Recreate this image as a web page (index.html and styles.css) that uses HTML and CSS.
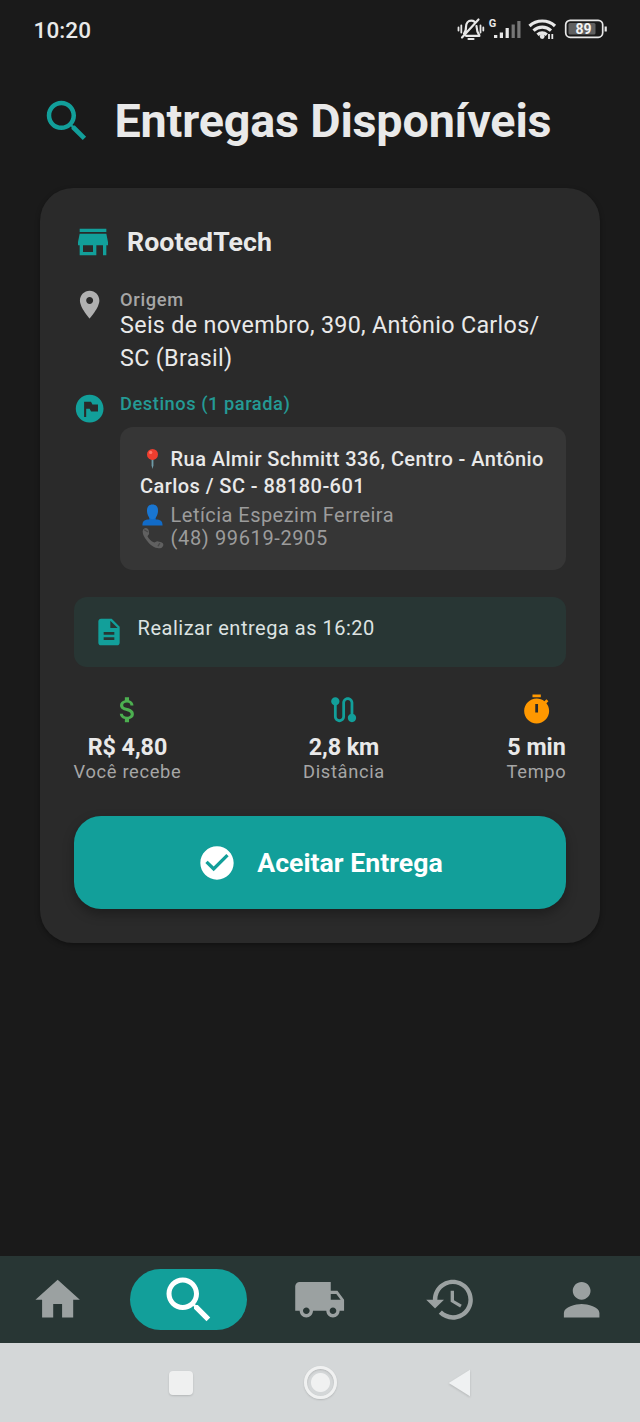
FILE: index.html
```html
<!DOCTYPE html>
<html lang="pt-BR">
<head>
<meta charset="utf-8">
<title>Entregas Disponíveis</title>
<link rel="stylesheet" href="styles.css">
</head>
<body>
<div class="screen">
  <header class="status">
    <span class="clock">10:20</span>
    <svg class="status-icons" viewBox="0 0 152 28" fill="none">
      <g stroke="#e8e8e8" stroke-width="2.200" stroke-linecap="round">
        <path d="M2.500 11.500v3M5.300 9.500v7M24.500 9.500v7M27.300 11.500v3" stroke-width="1.800"/>
        <path d="M10 19.800h13.500M8 17.500c2-2 2-4 2-6.500 0-4 2-6.300 5.300-6.300 1.300 0 2.300.3 3 .9M20.500 10c.2 3.500.2 6 2.800 9.300M12.500 23h5M6 21.500L22.500 3.500"/>
      </g>
      <text class="net" x="32.800" y="11.300">G</text>
      <path fill="#e8e8e8" d="M38 19h3.300v3H38zM43.800 16.500h3.200V22h-3.200zM49.600 12h3.200v10h-3.200z"/>
      <path fill="#777" d="M55.600 8.500h3.200V22h-3.200zM61.300 5h3.200v17h-3.200z"/>
      <g stroke="#e8e8e8" stroke-width="3.200">
        <path d="M73.500 10c7-6.700 18.500-6.700 25.500 0M77.500 14.700c5-4.700 12.500-4.700 17.500 0M81.500 18.800c2.800-2.500 6.500-2.500 9.300 0"/>
      </g>
      <circle cx="86.200" cy="20.500" r="2.400" fill="#e8e8e8"/>
      <path d="M93 18v5M96.300 18v5" stroke="#e8e8e8" stroke-width="1.800"/>
      <rect x="109.700" y="4.300" width="37" height="17" rx="4.500" stroke="#e8e8e8" stroke-width="1.700"/>
      <rect x="112.500" y="7" width="27" height="11.500" rx="1.500" fill="#606060"/>
      <path d="M149.700 10.500v5" stroke="#e8e8e8" stroke-width="2.200"/>
      <text class="level" x="119.500" y="17.800">89</text>
    </svg>
  </header>

  <div class="title">
    <svg class="i-title" viewBox="0 0 24 24"><path d="M15.500 14h-.79l-.28-.27C15.410 12.590 16 11.110 16 9.500 16 5.910 13.090 3 9.500 3S3 5.910 3 9.500 5.910 16 9.500 16c1.610 0 3.090-.59 4.230-1.570l.27.28v.79l5 4.990L20.490 19l-4.990-5zm-6 0C7.010 14 5 11.990 5 9.500S7.010 5 9.500 5 14 7.010 14 9.500 11.990 14 9.500 14z"/></svg>
    <h1>Entregas Disponíveis</h1>
  </div>

  <main class="card">
    <div class="store">
      <svg class="i-store" viewBox="0 0 24 24"><path d="M20 4H4v2h16V4zm1 10v-2l-1-5H4l-1 5v2h1v6h10v-6h4v6h2v-6h1zm-9 4H6v-4h6v4z"/></svg>
      <h2>RootedTech</h2>
    </div>

    <section class="place origin">
      <svg class="i-row grey" viewBox="0 0 24 24"><path d="M12 2C8.130 2 5 5.130 5 9c0 5.250 7 13 7 13s7-7.750 7-13c0-3.870-3.130-7-7-7zm0 9.500c-1.380 0-2.500-1.120-2.500-2.500s1.120-2.500 2.500-2.500 2.500 1.120 2.500 2.500-1.120 2.500-2.500 2.500z"/></svg>
      <div class="place-body">
        <div class="label">Origem</div>
        <p class="address">Seis de novembro, 390, Antônio Carlos/<br>SC (Brasil)</p>
      </div>
    </section>

    <section class="place">
      <svg class="i-row" viewBox="0 0 24 24"><path d="M12 2C6.480 2 2 6.480 2 12s4.480 10 10 10 10-4.480 10-10S17.520 2 12 2zm6 12h-5l-1-2H9.500v6H8V7h5l1 2h4v5z"/></svg>
      <div class="place-body dest">
        <div class="label teal">Destinos (1 parada)</div>
        <div class="stop">
          <p class="stop-address"><svg class="emoji" viewBox="0 0 24 24"><path d="M11 11h2v8l-1 4-1-4z" fill="#6f9aa6"/><circle cx="12" cy="7" r="6" fill="#ef3e2f"/><circle cx="10" cy="4.800" r="1.800" fill="#ff7769"/></svg>Rua Almir Schmitt 336, Centro - Antônio<br>Carlos / SC - 88180-601</p>
          <p class="contact"><svg class="emoji" viewBox="0 0 24 24"><path d="M8.500 13h7v4c5 .2 7.500 1.500 7.500 6.500H1C1 18.500 3.500 17.200 8.500 17z" fill="#116bc8"/><path d="M12 .5c4 0 6 2.500 6 6.500 0 5-2.500 9.500-6 9.500S6 12 6 7C6 3 8 .5 12 .5z" fill="#1976d2"/></svg>Letícia Espezim Ferreira</p>
          <p class="contact phone"><svg class="emoji" viewBox="0 0 24 24"><path d="M2 2.500C4.500 0 7 1 8 4l.3 3.500L6.500 10c1.500 3 4 5.500 7.500 7l3-1.500 4.500 1.200c3 1 3 4 .5 5.800-5 2.500-12-2-16-7.500C2.500 10.800 0 6 2 2.500z" fill="#606060"/><path d="M3 3l4 2.500M18 21l2-3.500" stroke="#484848" stroke-width="1.500"/></svg>(48) 99619-2905</p>
        </div>
      </div>
    </section>

    <section class="note">
      <svg class="i-note" viewBox="0 0 24 24"><path d="M14 2H6c-1.100 0-1.990.9-1.990 2L4 20c0 1.100.89 2 1.990 2H18c1.100 0 2-.9 2-2V8l-6-6zm2 16H8v-2h8v2zm0-4H8v-2h8v2zm-3-5V3.500L18.500 9H13z"/></svg>
      <p>Realizar entrega as 16:20</p>
    </section>

    <section class="stats">
      <div class="stat">
        <svg class="i-row green" viewBox="0 0 24 24"><path d="M11.800 10.900c-2.270-.59-3-1.200-3-2.150 0-1.090 1.010-1.850 2.700-1.850 1.780 0 2.440.85 2.500 2.100h2.210c-.07-1.720-1.120-3.300-3.210-3.810V3h-3v2.160c-1.940.42-3.500 1.680-3.500 3.610 0 2.310 1.910 3.460 4.700 4.130 2.500.6 3 1.480 3 2.410 0 .69-.49 1.790-2.700 1.790-2.060 0-2.870-.92-2.980-2.100h-2.200c.12 2.190 1.760 3.420 3.680 3.830V21h3v-2.150c1.950-.37 3.500-1.500 3.500-3.550 0-2.840-2.430-3.810-4.700-4.400z"/></svg>
        <strong>R$ 4,80</strong><span>Você recebe</span>
      </div>
      <div class="stat">
        <svg class="i-row" viewBox="0 0 24 24"><path d="M19 15.180V7c0-2.210-1.790-4-4-4s-4 1.790-4 4v10c0 1.100-.9 2-2 2s-2-.9-2-2V8.820C8.160 8.400 9 7.300 9 6c0-1.660-1.340-3-3-3S3 4.340 3 6c0 1.300.84 2.400 2 2.820V17c0 2.210 1.790 4 4 4s4-1.790 4-4V7c0-1.100.9-2 2-2s2 .9 2 2v8.180c-1.160.41-2 1.510-2 2.820 0 1.660 1.340 3 3 3s3-1.340 3-3c0-1.300-.84-2.400-2-2.820z"/></svg>
        <strong>2,8 km</strong><span>Distância</span>
      </div>
      <div class="stat">
        <svg class="i-row orange" viewBox="0 0 24 24"><path d="M9 1h6v2H9zM19.030 7.390l1.420-1.420c-.43-.51-.9-.99-1.410-1.410l-1.420 1.420C16.070 4.740 14.120 4 12 4c-4.970 0-9 4.030-9 9s4.020 9 9 9 9-4.030 9-9c0-2.120-.74-4.070-1.970-5.610zM13 14h-2V8h2v6z"/></svg>
        <strong>5 min</strong><span>Tempo</span>
      </div>
    </section>

    <button class="accept">
      <svg class="i-check" viewBox="0 0 24 24"><path d="M12 2C6.480 2 2 6.480 2 12s4.480 10 10 10 10-4.480 10-10S17.520 2 12 2zm-2 15l-5-5 1.410-1.410L10 14.170l7.590-7.590L19 8l-9 9z"/></svg>
      <span>Aceitar Entrega</span>
    </button>
  </main>

  <nav class="tabs">
    <a class="tab"><svg viewBox="0 0 24 24"><path d="M10 20v-6h4v6h5v-8h3L12 3 2 12h3v8z"/></svg></a>
    <a class="tab active"><svg viewBox="0 0 24 24"><path d="M15.500 14h-.79l-.28-.27C15.410 12.590 16 11.110 16 9.500 16 5.910 13.090 3 9.500 3S3 5.910 3 9.500 5.910 16 9.500 16c1.610 0 3.090-.59 4.230-1.570l.27.28v.79l5 4.990L20.490 19l-4.990-5zm-6 0C7.010 14 5 11.990 5 9.500S7.010 5 9.500 5 14 7.010 14 9.500 11.990 14 9.500 14z"/></svg></a>
    <a class="tab"><svg viewBox="0 0 24 24"><path d="M20 8h-3V4H3c-1.100 0-2 .9-2 2v11h2c0 1.660 1.340 3 3 3s3-1.340 3-3h6c0 1.660 1.340 3 3 3s3-1.340 3-3h2v-5l-3-4zM6 18.500c-.83 0-1.500-.67-1.500-1.500s.67-1.500 1.500-1.500 1.500.67 1.500 1.500-.67 1.500-1.500 1.500zm13.500-9l1.960 2.500H17V9.500h2.500zm-1.500 9c-.83 0-1.500-.67-1.500-1.500s.67-1.500 1.500-1.500 1.500.67 1.500 1.500-.67 1.500-1.500 1.500z"/></svg></a>
    <a class="tab"><svg viewBox="0 0 24 24"><path d="M13 3c-4.970 0-9 4.030-9 9H1l3.890 3.890.07.14L9 12H6c0-3.870 3.130-7 7-7s7 3.130 7 7-3.130 7-7 7c-1.930 0-3.680-.79-4.940-2.060l-1.420 1.420C8.270 19.990 10.510 21 13 21c4.970 0 9-4.030 9-9s-4.030-9-9-9zm-1 5v5l4.280 2.540.72-1.210-3.500-2.080V8H12z"/></svg></a>
    <a class="tab"><svg viewBox="0 0 24 24"><path d="M12 12c2.210 0 4-1.790 4-4s-1.790-4-4-4-4 1.790-4 4 1.790 4 4 4zm0 2c-2.670 0-8 1.340-8 4v2h16v-2c0-2.660-5.330-4-8-4z"/></svg></a>
  </nav>

  <footer class="system">
    <span class="sys-square"></span>
    <span class="sys-ring"></span>
    <svg class="sys-back" viewBox="0 0 23 28"><path d="M22 .8v26.400L.8 14z"/></svg>
  </footer>
</div>
</body>
</html>
```

FILE: styles.css
```css
* { box-sizing: border-box; margin: 0; padding: 0; }
body { background: #1a1a1a; font-family: Roboto, "Liberation Sans", sans-serif; color: #e9e9e9; }
svg { display: block; flex: none; fill: #129f9a; }
.screen { width: 640px; height: 1422px; display: flex; flex-direction: column; overflow: hidden; }

.status { height: 60px; padding: 0 32px 0 33.500px; display: flex; justify-content: space-between; align-items: center; }
.clock { font-size: 22.500px; font-weight: 500; letter-spacing: .1px; }
.status-icons { width: 152px; height: 28px; fill: none; }
.net { font-size: 11px; font-weight: 700; fill: #e8e8e8; }
.level { font-family: Roboto, "Liberation Sans", sans-serif; font-size: 14px; font-weight: 700; fill: #f2f2f2; }

.title { height: 128px; padding: 0 40px 7px; display: flex; align-items: center; gap: 20.500px; }
.i-title { width: 54px; height: 54px; }
.title h1 { font-size: 46.700px; font-weight: 700; line-height: 56px; white-space: nowrap; letter-spacing: -.18px; }

.card { height: 755px; margin: 0 40px; padding: 33.500px 33.600px; border-radius: 33px; background: #2a2a2a; box-shadow: 0 2px 5px rgba(0, 0, 0, .35); display: flex; flex-direction: column; }
.store { height: 40px; display: flex; align-items: center; gap: 13.700px; }
.i-store { width: 40px; height: 40px; margin-left: -.300px; }
.store h2 { font-size: 26.700px; font-weight: 700; letter-spacing: .08px; }

.place { display: flex; gap: 13.400px; }
.origin { margin-top: 26.500px; height: 103.500px; }
.i-row { width: 33.300px; height: 33.300px; }
.place > .i-row { margin-left: -.200px; }
.grey { fill: #b0b0b0; }
.green { fill: #4caf50; }
.orange { fill: #ff9800; }
.place-body { flex: 1; padding-top: 1.500px; }
.label { font-size: 18.300px; font-weight: 500; line-height: 19px; letter-spacing: .65px; color: #a6a6a6; }
.address { font-size: 23.300px; line-height: 33.300px; letter-spacing: .31px; white-space: nowrap; }
.teal { color: #249a95; letter-spacing: .52px; }
.dest { padding-top: 2px; }
.stop { margin-top: 14.500px; height: 142.500px; padding: 18.800px 20px; border-radius: 13px; background: #363636; white-space: nowrap; }
.stop-address { font-size: 20px; font-weight: 500; line-height: 26.700px; letter-spacing: .43px; margin-bottom: 5px; }
.contact { font-size: 20px; line-height: 23px; letter-spacing: .46px; color: #9c9c9c; }
.phone { letter-spacing: .62px; }
.emoji { display: inline-block; width: 23px; height: 22px; margin: 0 6.500px 0 1px; vertical-align: -4px; }

.note { margin-top: 27px; height: 70px; padding: 0 19px; border-radius: 13px; background: #283634; display: flex; align-items: center; gap: 13px; }
.i-note { width: 32px; height: 32px; }
.note p { font-size: 20px; letter-spacing: .51px; padding-bottom: 7px; color: #dde3e2; }

.stats { margin-top: 26.500px; height: 123.300px; display: flex; justify-content: space-between; }
.stat { display: flex; flex-direction: column; align-items: center; }
.stat strong { margin-top: 7px; font-size: 23.300px; font-weight: 700; line-height: 28px; letter-spacing: -.05px; }
.stat span { font-size: 18.300px; line-height: 22px; letter-spacing: .67px; color: #a6a6a6; }

.accept { height: 93px; border: 0; border-radius: 27px; background: #129f9a; color: #fff; font: 700 26.700px Roboto, "Liberation Sans", sans-serif; display: flex; align-items: center; justify-content: center; gap: 20px; box-shadow: 0 5px 12px rgba(0, 0, 0, .3); }
.i-check { width: 40px; height: 40px; fill: #fff; }
.accept span { padding-top: 1px; }

.tabs { margin-top: auto; height: 87px; background: #283634; display: flex; justify-content: space-between; align-items: center; }
.tab { width: 117px; height: 60.500px; border-radius: 31px; display: flex; align-items: center; justify-content: center; }
.tab:first-child { margin-left: -1px; }
.tab svg { width: 53.300px; height: 53.300px; fill: #9ba1a1; }
.tab.active { background: #129f9a; }
.tab.active svg { width: 60px; height: 60px; fill: #fff; }

.system { height: 79px; padding-right: 1px; background: #d4d7d8; display: flex; align-items: center; justify-content: center; gap: 111px; }
.sys-square { width: 24px; height: 24px; border-radius: 4px; background: #eff0f0; box-shadow: 0 1px 2px rgba(0, 0, 0, .15); }
.sys-ring { width: 33px; height: 33px; border-radius: 50%; border: 3px solid #f0f1f1; background: radial-gradient(circle, #f0f1f1 9px, transparent 10px); box-shadow: 0 1px 2px rgba(0, 0, 0, .15), inset 0 1px 2px rgba(0, 0, 0, .15); }
.sys-back { width: 23px; height: 28px; fill: #eff1f2; filter: drop-shadow(0 1px 1px rgba(0, 0, 0, .15)); }
```
